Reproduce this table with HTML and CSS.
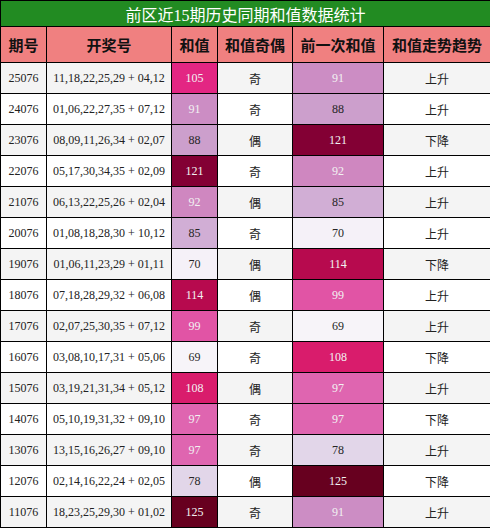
FILE: index.html
```html
<!DOCTYPE html>
<html lang="zh">
<head>
    <meta charset="UTF-8">
    <meta name="viewport" content="width=device-width, initial-scale=1.0">
    <title>前区近15期历史同期和值数据统计</title>
    <link rel="stylesheet" href="styles.css">
</head>
<body>
    <table class="stat-table">
        <colgroup>
            <col class="c-issue">
            <col class="c-nums">
            <col class="c-sum">
            <col class="c-odd">
            <col class="c-prev">
            <col class="c-trend">
        </colgroup>
        <thead>
            <tr class="title-row">
                <th colspan="6">前区近15期历史同期和值数据统计</th>
            </tr>
            <tr class="head-row">
                <th>期号</th>
                <th>开奖号</th>
                <th>和值</th>
                <th>和值奇偶</th>
                <th>前一次和值</th>
                <th>和值走势趋势</th>
            </tr>
        </thead>
        <tbody id="rows"></tbody>
    </table>

    <script>
        const data = [
            ["25076", "11,18,22,25,29 + 04,12", 105, "奇", 91, "上升"],
            ["24076", "01,06,22,27,35 + 07,12", 91, "奇", 88, "上升"],
            ["23076", "08,09,11,26,34 + 02,07", 88, "偶", 121, "下降"],
            ["22076", "05,17,30,34,35 + 02,09", 121, "奇", 92, "上升"],
            ["21076", "06,13,22,25,26 + 02,04", 92, "偶", 85, "上升"],
            ["20076", "01,08,18,28,30 + 10,12", 85, "奇", 70, "上升"],
            ["19076", "01,06,11,23,29 + 01,11", 70, "偶", 114, "下降"],
            ["18076", "07,18,28,29,32 + 06,08", 114, "偶", 99, "上升"],
            ["17076", "02,07,25,30,35 + 07,12", 99, "奇", 69, "上升"],
            ["16076", "03,08,10,17,31 + 05,06", 69, "奇", 108, "下降"],
            ["15076", "03,19,21,31,34 + 05,12", 108, "偶", 97, "上升"],
            ["14076", "05,10,19,31,32 + 09,10", 97, "奇", 97, "下降"],
            ["13076", "13,15,16,26,27 + 09,10", 97, "奇", 78, "上升"],
            ["12076", "02,14,16,22,24 + 02,05", 78, "偶", 125, "下降"],
            ["11076", "18,23,25,29,30 + 01,02", 125, "奇", 91, "上升"]
        ];

        // PuRd scale
        const stops = ["#f7f4f9", "#e7e1ef", "#d4b9da", "#c994c7", "#df65b0", "#e7298a", "#ce1256", "#980043", "#67001f"];
        const lo = 69, hi = 125;

        function hexToRgb(h) {
            return [1, 3, 5].map(i => parseInt(h.substr(i, 2), 16));
        }

        function heat(v) {
            const t = (v - lo) / (hi - lo) * (stops.length - 1);
            const i = Math.min(Math.floor(t), stops.length - 2);
            const f = t - i;
            const a = hexToRgb(stops[i]), b = hexToRgb(stops[i + 1]);
            const c = a.map((x, k) => Math.round(x + (b[k] - x) * f));
            return { bg: "rgb(" + c.join(",") + ")", light: (v - lo) / (hi - lo) > 0.36 };
        }

        function heatCell(v) {
            const td = document.createElement("td");
            const h = heat(v);
            td.textContent = v;
            td.className = "heat" + (h.light ? " on-dark" : "");
            td.style.background = h.bg;
            return td;
        }

        function textCell(txt, cls) {
            const td = document.createElement("td");
            td.textContent = txt;
            if (cls) td.className = cls;
            return td;
        }

        const tbody = document.getElementById("rows");
        data.forEach(r => {
            const tr = document.createElement("tr");
            tr.appendChild(textCell(r[0]));
            tr.appendChild(textCell(r[1]));
            tr.appendChild(heatCell(r[2]));
            tr.appendChild(textCell(r[3], "cjk"));
            tr.appendChild(heatCell(r[4]));
            tr.appendChild(textCell(r[5], "cjk"));
            tbody.appendChild(tr);
        });
    </script>
</body>
</html>
```

FILE: styles.css
```css
body {
    margin: 0;
    font-family: "Liberation Serif", "Noto Sans CJK SC", serif;
    color: #222;
}
.stat-table {
    width: 490px;
    border-collapse: collapse;
    table-layout: fixed;
    font-size: 12px;
}
.stat-table th,
.stat-table td {
    border: 1px solid #000;
    padding: 0;
    text-align: center;
    white-space: nowrap;
}
.c-issue { width: 46px; }
.c-nums { width: 125px; }
.c-sum { width: 46px; }
.c-odd { width: 75px; }
.c-prev { width: 91px; }
.c-trend { width: 107px; }
.title-row th {
    background: #228b22;
    color: #fff;
    font-size: 16px;
    font-weight: normal;
    height: 25px;
}
.head-row th {
    background: #f08080;
    color: #111;
    font-family: "Noto Sans CJK SC", sans-serif;
    font-size: 15px;
    font-weight: bold;
    height: 35px;
}
.stat-table tbody td {
    height: 30px;
}
.stat-table tbody tr:nth-child(odd) {
    background: #f4f4f4;
}
.stat-table tbody tr:nth-child(even) {
    background: #fff;
}
.cjk {
    font-family: "Noto Sans CJK SC", sans-serif;
}
.heat {
    color: #262626;
}
.heat.on-dark {
    color: #f2f2f2;
}
```
